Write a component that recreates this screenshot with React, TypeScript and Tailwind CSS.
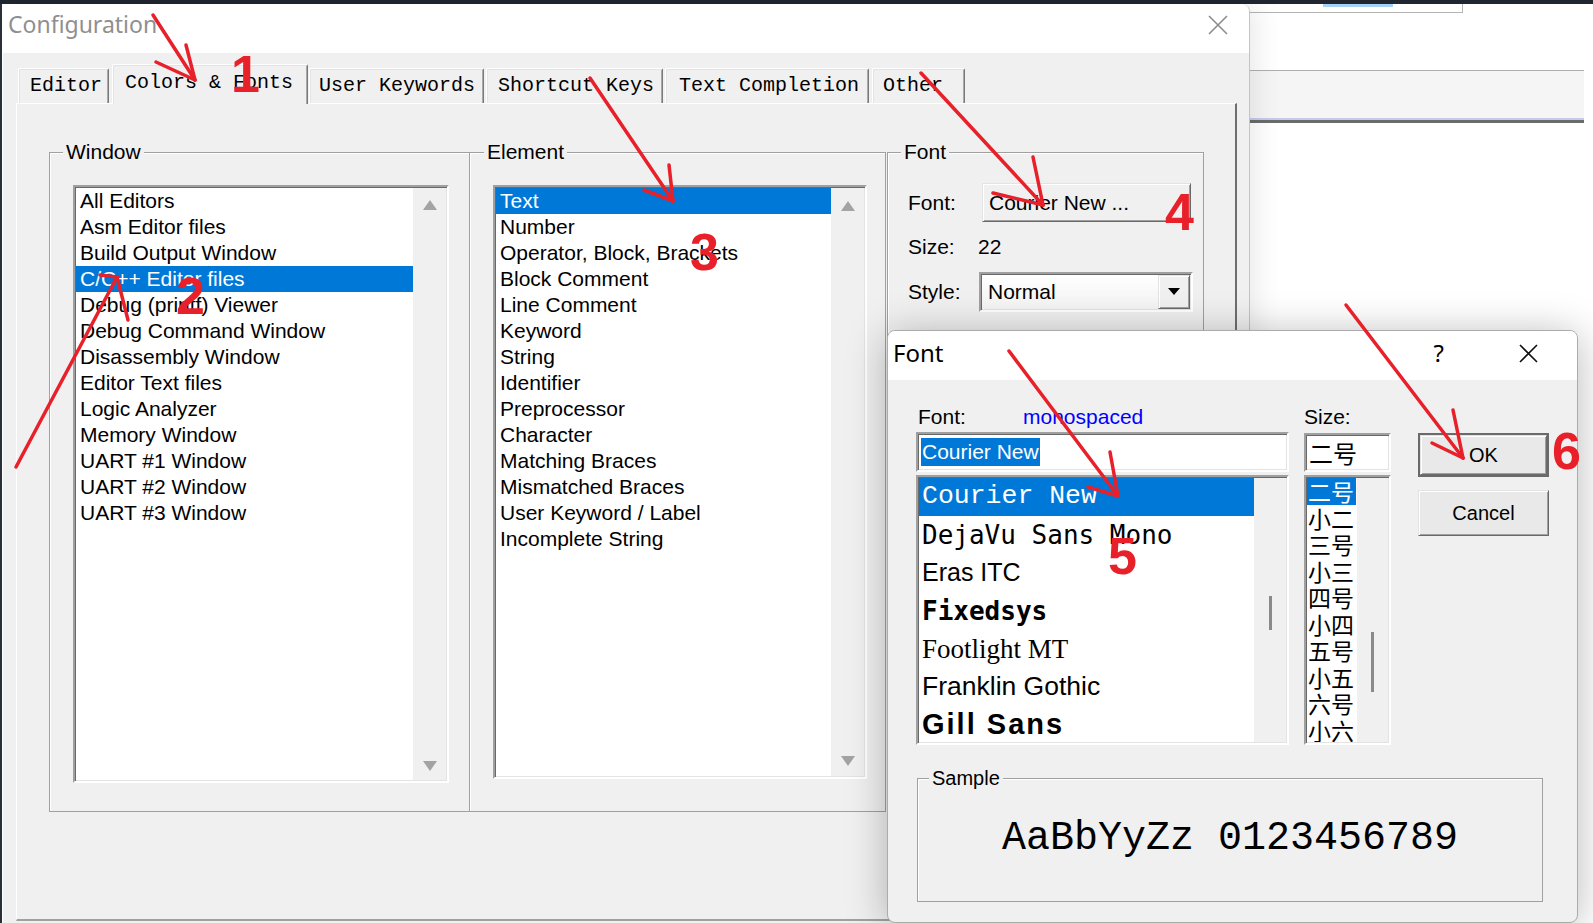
const sunken =
  'border-2 border-t-[#a0a0a0] border-l-[#a0a0a0] border-b-white border-r-white p-px shadow-[inset_1px_1px_0_#696969,inset_-1px_-1px_0_#e3e3e3]';
const raised =
  'border border-t-[#e3e3e3] border-l-[#e3e3e3] border-b-[#696969] border-r-[#696969] shadow-[inset_1px_1px_0_#ffffff,inset_-1px_-1px_0_#a0a0a0]';

const windowItems = [
  'All Editors',
  'Asm Editor files',
  'Build Output Window',
  'C/C++ Editor files',
  'Debug (printf) Viewer',
  'Debug Command Window',
  'Disassembly Window',
  'Editor Text files',
  'Logic Analyzer',
  'Memory Window',
  'UART #1 Window',
  'UART #2 Window',
  'UART #3 Window',
];

const elementItems = [
  'Text',
  'Number',
  'Operator, Block, Brackets',
  'Block Comment',
  'Line Comment',
  'Keyword',
  'String',
  'Identifier',
  'Preprocessor',
  'Character',
  'Matching Braces',
  'Mismatched Braces',
  'User Keyword / Label',
  'Incomplete String',
];

const tabs = [
  { label: 'Editor', cls: 'ml-[2px] w-[91px] pl-[11px]' },
  { label: 'Colors & Fonts', cls: 'ml-[3px] w-[196px] pl-[12px]', active: true },
  { label: 'User Keywords', cls: 'ml-[1px] w-[175px] pl-[9px]' },
  { label: 'Shortcut Keys', cls: 'ml-[2px] w-[177px] pl-[11px]' },
  { label: 'Text Completion', cls: 'ml-[2px] w-[204px] pl-[13px]' },
  { label: 'Other', cls: 'ml-[3px] w-[93px] pl-[10px]' },
];

const fontNames = [
  { name: 'Courier New', cls: "font-['Liberation_Mono',monospace] text-[26.5px]" },
  { name: 'DejaVu Sans Mono', cls: "font-['DejaVu_Sans_Mono',monospace] text-[26px]" },
  { name: 'Eras ITC', cls: "font-['Liberation_Sans',sans-serif] text-[25px]" },
  { name: 'Fixedsys', cls: "font-['DejaVu_Sans_Mono',monospace] text-[26px] font-bold" },
  { name: 'Footlight MT', cls: "font-['Liberation_Serif',serif] text-[27px]" },
  { name: 'Franklin Gothic', cls: "font-['Liberation_Sans',sans-serif] text-[26.5px]" },
  { name: 'Gill Sans', cls: "font-['Liberation_Sans',sans-serif] text-[29px] font-bold tracking-[2px]" },
];

const sizes = ['二号', '小二', '三号', '小三', '四号', '小四', '五号', '小五', '六号', '小六'];

function ScrollArrow({ down }: { down?: boolean }) {
  return (
    <svg width="16" height="12" viewBox="0 0 16 12">
      <polygon points={down ? '1,1 15,1 8,11' : '8,1 15,11 1,11'} fill="#a3a3a3" />
    </svg>
  );
}

function ListBox({
  items,
  selected,
  boxCls,
  rowsCls,
  barCls,
}: {
  items: string[];
  selected: number;
  boxCls: string;
  rowsCls: string;
  barCls: string;
}) {
  return (
    <div className={`${sunken} ${boxCls} flex bg-white`}>
      <div className={`${rowsCls} overflow-hidden`}>
        {items.map((item, i) => (
          <div
            key={item}
            className={`h-[26px] whitespace-nowrap pl-[4px] text-[21px] leading-[26px] ${
              i === selected ? 'bg-[#0078d7] text-white' : 'text-black'
            }`}
          >
            {item}
          </div>
        ))}
      </div>
      {/* scrollbar */}
      <div className={`${barCls} flex flex-1 flex-col items-center justify-between bg-[#f0f0f0]`}>
        <ScrollArrow />
        <ScrollArrow down />
      </div>
    </div>
  );
}

function ConfigDialog() {
  return (
    <div className="relative z-10 flex h-full w-[1250px] flex-col overflow-hidden rounded-tr-[8px] border-l-2 border-r border-l-[#2b3038] border-r-[#c4c4c4] bg-[#f0f0f0] shadow-[6px_0_28px_rgba(0,0,0,0.09)]">
      {/* title bar */}
      <div className="flex h-[49px] items-center justify-between bg-white pb-[8px] pl-[6px] pr-[21px]">
        <span className="font-['Noto_Sans',sans-serif] text-[23px] text-[#8f8f8f]">Configuration</span>
        <svg width="20" height="20" viewBox="0 0 20 20">
          <path d="M1 1 L19 19 M19 1 L1 19" stroke="#8c8c8c" strokeWidth="1.6" />
        </svg>
      </div>

      <div className="flex-1 pl-[14px] pt-[11px] shadow-[inset_1px_0_0_#ffffff]">
        {/* tabs */}
        <div className="flex h-[39px] items-end font-['Liberation_Mono',monospace] text-[20px]">
          {tabs.map((t) => (
            <div
              key={t.label}
              className={`${t.cls} flex items-center whitespace-nowrap rounded-t-[2px] border-l border-r border-t border-l-white border-r-[#7a7a7a] border-t-white bg-[#f0f0f0] shadow-[inset_1px_1px_0_#e3e3e3,inset_-1px_0_0_#a8a8a8] ${
                t.active ? 'relative z-10 -mb-px h-[40px] pb-[4px]' : 'h-[35px]'
              }`}
            >
              {t.label}
            </div>
          ))}
        </div>

        {/* tab page */}
        <div className="flex h-[818px] w-[1221px] items-start border-b-2 border-l border-r-2 border-t border-b-[#a0a0a0] border-l-white border-r-[#6e6e6e] border-t-white pl-[32px] pt-[36px]">
          <fieldset className="h-[672px] w-[421px] border border-[#a0a0a0] pl-[23px] pt-[21px] shadow-[inset_1px_1px_0_#ffffff]">
            <legend className="-ml-[10px] bg-[#f0f0f0] px-[3px] text-[21px] leading-[24px]">Window</legend>
            <ListBox
              items={windowItems}
              selected={3}
              boxCls="h-[598px] w-[376px]"
              rowsCls="w-[337px]"
              barCls="pt-[11px] pb-[8px]"
            />
          </fieldset>

          <fieldset className="-ml-px h-[672px] w-[417px] border border-[#a0a0a0] pl-[23px] pt-[21px] shadow-[inset_1px_1px_0_#ffffff]">
            <legend className="-ml-[9px] bg-[#f0f0f0] px-[3px] text-[21px] leading-[24px]">Element</legend>
            <ListBox
              items={elementItems}
              selected={0}
              boxCls="h-[594px] w-[374px]"
              rowsCls="w-[335px]"
              barCls="pt-[12px] pb-[9px]"
            />
          </fieldset>

          <fieldset className="ml-px h-[320px] w-[317px] border border-[#a0a0a0] pl-[20px] pt-[19px] text-[21px] shadow-[inset_1px_1px_0_#ffffff]">
            <legend className="-ml-[7px] bg-[#f0f0f0] px-[3px] leading-[24px]">Font</legend>
            <div className="flex h-[39px] items-center">
              <span className="w-[74px]">Font:</span>
              <div className={`${raised} flex h-[39px] w-[209px] items-center bg-[#f0f0f0] pl-[6px]`}>
                Courier New ...
              </div>
            </div>
            <div className="mt-[13px] flex h-[24px] items-center">
              <span className="w-[70px]">Size:</span>
              <span>22</span>
            </div>
            <div className="mt-[13px] flex h-[40px] items-center">
              <span className="w-[71px]">Style:</span>
              <div className={`${sunken} flex h-[40px] w-[214px] bg-linear-to-b from-white to-[#f3f3f3]`}>
                <span className="flex flex-1 items-center pl-[6px]">Normal</span>
                <div className={`${raised} flex w-[32px] items-center justify-center bg-[#f0f0f0]`}>
                  <svg width="12" height="8" viewBox="0 0 12 8">
                    <polygon points="0,0 12,0 6,7" fill="#000" />
                  </svg>
                </div>
              </div>
            </div>
          </fieldset>
        </div>
      </div>
    </div>
  );
}

function Background() {
  return (
    <div className="flex flex-1 flex-col bg-white">
      <div className="h-[9px] w-[213px] border-b border-r border-[#b4b4b4] pl-[73px]">
        <div className="h-[3px] w-[70px] bg-[#a6d2fa]" />
      </div>
      <div className="mr-[9px] mt-[57px] flex h-[53px] flex-col border-t border-[#b0b0b0] bg-[#f5f5f5]">
        <div className="flex-1" />
        <div className="h-[2px] bg-[#c3cbea]" />
        <div className="h-[3px] bg-[#6b6b6b]" />
      </div>
    </div>
  );
}

function FontDialog() {
  return (
    <div className="absolute left-[887px] top-[330px] z-20 flex h-[593px] w-[691px] flex-col overflow-hidden rounded-[8px] border border-[#ababab] bg-[#f0f0f0] shadow-[0_4px_40px_rgba(0,0,0,0.28)]">
      {/* title bar */}
      <div className="flex h-[49px] items-center bg-white pb-[5px] pl-[5px] pr-[39px]">
        <span className="flex-1 font-['Noto_Sans',sans-serif] text-[24px]">Font</span>
        <span className="font-['Noto_Sans',sans-serif] text-[24px] leading-none">?</span>
        <svg className="ml-[75px]" width="19" height="19" viewBox="0 0 19 19">
          <path d="M1 1 L18 18 M18 1 L1 18" stroke="#111" strokeWidth="1.6" />
        </svg>
      </div>

      <div className="flex flex-col pl-[28px] pt-[25px] text-[21px]">
        <div className="flex items-start">
          {/* font name column */}
          <div className="flex w-[373px] flex-col">
            <div className="flex h-[24px] items-center pl-[2px]">
              <span className="w-[105px]">Font:</span>
              <span className="text-[#0000ff]">monospaced</span>
            </div>
            <div className={`${sunken} mt-[3px] flex h-[40px] items-center bg-white pl-[3px]`}>
              <span className="bg-[#0078d7] px-px leading-[28px] text-white">Courier New</span>
            </div>
            <div className={`${sunken} mt-[3px] flex h-[270px] bg-white`}>
              <div className="w-[335px] overflow-hidden">
                {fontNames.map((f, i) => (
                  <div
                    key={f.name}
                    className={`${f.cls} flex h-[38px] items-center whitespace-nowrap pl-[3px] ${
                      i === 0 ? 'bg-[#0078d7] text-white' : 'text-black'
                    }`}
                  >
                    {f.name}
                  </div>
                ))}
              </div>
              <div className="flex flex-1 flex-col items-center bg-[#f0f0f0]">
                <div className="mt-[118px] h-[34px] w-[3px] bg-[#8a8a8a]" />
              </div>
            </div>
          </div>

          {/* size column */}
          <div className="ml-[15px] flex w-[87px] flex-col">
            <div className="flex h-[24px] items-center">Size:</div>
            <div
              className={`${sunken} mt-[4px] flex h-[39px] items-center bg-white pl-[3px] font-['Noto_Sans_CJK_SC',sans-serif] text-[24px]`}
            >
              二号
            </div>
            <div className={`${sunken} mt-[3px] flex h-[270px] bg-white`}>
              <div className="w-[50px] overflow-hidden font-['Noto_Sans_CJK_SC',sans-serif] text-[23px]">
                {sizes.map((s, i) => (
                  <div
                    key={s}
                    className={`h-[26.5px] w-[49px] whitespace-nowrap pl-px leading-[26.5px] ${
                      i === 0 ? 'bg-[#0078d7] text-white' : 'text-black'
                    }`}
                  >
                    {s}
                  </div>
                ))}
              </div>
              <div className="flex flex-1 flex-col items-center bg-[#f0f0f0]">
                <div className="mt-[154px] h-[60px] w-[3px] bg-[#8a8a8a]" />
              </div>
            </div>
          </div>

          {/* buttons */}
          <div className="ml-[27px] flex w-[131px] flex-col text-[20px]">
            <div className="mt-[28px] border-2 border-[#6a6a6a]">
              <div className={`${raised} flex h-[40px] items-center justify-center bg-[#e9e9e9]`}>OK</div>
            </div>
            <div className={`${raised} mt-[13px] flex h-[46px] items-center justify-center bg-[#e9e9e9]`}>
              Cancel
            </div>
          </div>
        </div>

        <fieldset className="ml-px mt-[21px] h-[136px] w-[626px] border border-[#a0a0a0] shadow-[inset_1px_1px_0_#ffffff]">
          <legend className="ml-[11px] bg-[#f0f0f0] px-[3px] text-[20px] leading-[24px]">Sample</legend>
          <div className="pt-[26px] text-center font-['Liberation_Mono',monospace] text-[40px] leading-[45px]">
            AaBbYyZz 0123456789
          </div>
        </fieldset>
      </div>
    </div>
  );
}

// red markup drawn over the screenshot
const arrows = [
  { main: '153,15 195,80', a: '156,62 195,80', b: '186,45 195,80' },
  { main: '16,467 117,277', a: '100,275 117,277', b: '128,320 117,277' },
  { main: '590,78 673,201', a: '644,190 673,201', b: '669,165 673,201' },
  { main: '921,73 1043,205', a: '993,193 1043,205', b: '1033,157 1043,205' },
  { main: '1009,351 1118,496', a: '1088,487 1118,496', b: '1110,452 1118,496' },
  { main: '1346,305 1463,458', a: '1432,443 1463,458', b: '1453,410 1463,458' },
];

const marks = [
  { n: '1', cls: 'left-[231px] top-[48px]' },
  { n: '2', cls: 'left-[176px] top-[270px]' },
  { n: '3', cls: 'left-[690px] top-[226px]' },
  { n: '4', cls: 'left-[1165px] top-[186px]' },
  { n: '5', cls: 'left-[1108px] top-[530px]' },
  { n: '6', cls: 'left-[1552px] top-[425px]' },
];

function Annotations() {
  return (
    <>
      <svg className="pointer-events-none absolute left-0 top-0 z-30" width="1593" height="923">
        {arrows.map((ar, i) => (
          <g key={i} stroke="#e8202a" strokeWidth="3.5" strokeLinecap="round" fill="none">
            <polyline points={ar.main} />
            <polyline points={ar.a} />
            <polyline points={ar.b} />
          </g>
        ))}
      </svg>
      {marks.map((m) => (
        <span
          key={m.n}
          className={`${m.cls} pointer-events-none absolute z-30 text-[52px] font-bold leading-none text-[#e8202a]`}
        >
          {m.n}
        </span>
      ))}
    </>
  );
}

export default function App() {
  return (
    <div className="relative h-[923px] w-[1593px] overflow-hidden bg-white font-['Liberation_Sans',Arial,sans-serif] text-black">
      <div className="h-[4px] bg-[#1f262f]" />
      <div className="flex h-[919px]">
        <ConfigDialog />
        <Background />
      </div>
      <FontDialog />
      <Annotations />
    </div>
  );
}
